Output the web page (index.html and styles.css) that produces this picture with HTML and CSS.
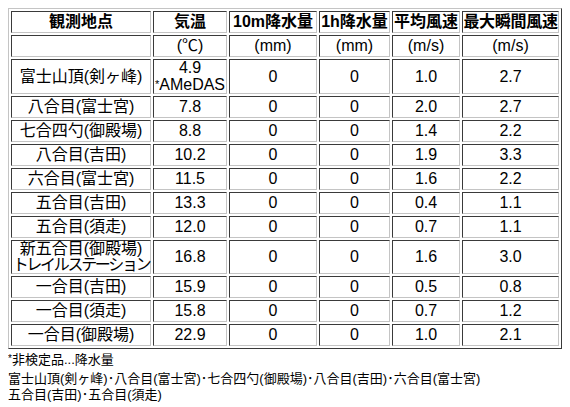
FILE: index.html
```html
<!DOCTYPE html>
<html lang="ja">
<head>
<meta charset="utf-8">
<title>富士山 観測</title>
<link rel="stylesheet" href="styles.css">
</head>
<body>
<table class="obs">
  <thead>
    <tr>
      <th class="c1">観測地点</th>
      <th class="c2">気温</th>
      <th class="c3">10m降水量</th>
      <th class="c4">1h降水量</th>
      <th class="c5">平均風速</th>
      <th class="c6">最大瞬間風速</th>
    </tr>
  </thead>
  <tbody>
    <tr><td></td><td>(℃)</td><td>(mm)</td><td>(mm)</td><td>(m/s)</td><td>(m/s)</td></tr>
    <tr><td>富士山頂(剣ヶ峰)</td><td class="two">4.9<br><span class="ast">*</span>AMeDAS</td><td>0</td><td>0</td><td>1.0</td><td>2.7</td></tr>
    <tr><td>八合目(富士宮)</td><td>7.8</td><td>0</td><td>0</td><td>2.0</td><td>2.7</td></tr>
    <tr><td>七合四勺(御殿場)</td><td>8.8</td><td>0</td><td>0</td><td>1.4</td><td>2.2</td></tr>
    <tr><td>八合目(吉田)</td><td>10.2</td><td>0</td><td>0</td><td>1.9</td><td>3.3</td></tr>
    <tr><td>六合目(富士宮)</td><td>11.5</td><td>0</td><td>0</td><td>1.6</td><td>2.2</td></tr>
    <tr><td>五合目(吉田)</td><td>13.3</td><td>0</td><td>0</td><td>0.4</td><td>1.1</td></tr>
    <tr><td>五合目(須走)</td><td>12.0</td><td>0</td><td>0</td><td>0.7</td><td>1.1</td></tr>
    <tr><td class="two">新五合目(御殿場)<br><span class="tight">トレイルステーション</span></td><td>16.8</td><td>0</td><td>0</td><td>1.6</td><td>3.0</td></tr>
    <tr><td>一合目(吉田)</td><td>15.9</td><td>0</td><td>0</td><td>0.5</td><td>0.8</td></tr>
    <tr><td>一合目(須走)</td><td>15.8</td><td>0</td><td>0</td><td>0.7</td><td>1.2</td></tr>
    <tr><td>一合目(御殿場)</td><td>22.9</td><td>0</td><td>0</td><td>1.0</td><td>2.1</td></tr>
  </tbody>
</table>
<div class="notes">
  <div class="note-title"><span class="ast-s">*</span>非検定品...降水量</div>
  <div class="note-list">富士山頂(剣ヶ峰)･八合目(富士宮)･七合四勺(御殿場)･八合目(吉田)･六合目(富士宮)<br>五合目(吉田)･五合目(須走)</div>
</div>
</body>
</html>
```
FILE: styles.css
```css
html, body {
  background: #ffffff;
}
body {
  margin: 8px;
  color: #000000;
  font-family: "Liberation Sans", "Noto Sans CJK JP", sans-serif;
}
.obs {
  table-layout: fixed;
  width: 554px;
  border-collapse: separate;
  border-spacing: 2px;
  border: 1px solid;
  border-color: #c4c4c4 #3a3a3a #3a3a3a #c4c4c4;
  font-size: 16px;
  line-height: 16px;
}
.obs th,
.obs td {
  box-sizing: border-box;
  height: 22px;
  padding: 0;
  text-align: center;
  vertical-align: middle;
  border: 1px solid;
  border-color: #3a3a3a #c4c4c4 #c4c4c4 #3a3a3a;
  white-space: nowrap;
}
.obs th {
  font-weight: bold;
}
.obs .two {
  line-height: 16px;
}
.c1 { width: 140px; }
.c2 { width: 74px; }
.c3 { width: 88px; }
.c4 { width: 71px; }
.c5 { width: 68px; }
.c6 { width: 97px; letter-spacing: -0.3px; }
.ast {
  font-size: 11px;
  vertical-align: 2px;
}
.tight {
  letter-spacing: -2.3px;
}
.notes {
  margin-top: 2px;
  font-size: 13px;
  line-height: 16px;
}
.note-list {
  margin-top: 3px;
}
.ast-s {
  font-size: 10px;
  vertical-align: 2px;
}
```
